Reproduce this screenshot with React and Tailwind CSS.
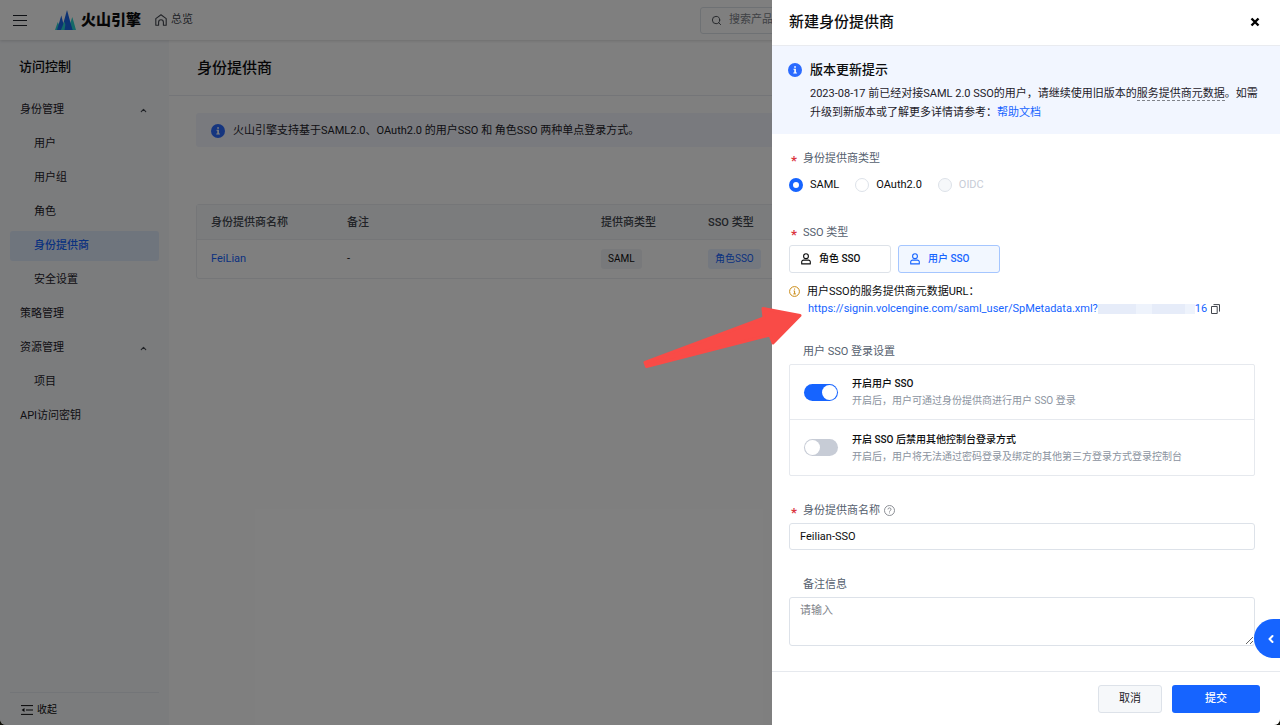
import { useState } from 'react'
import clsx from 'clsx'
import { ChevronUp, ChevronLeft, Search } from 'lucide-react'

const MENU = [
  { label: '身份管理', group: true },
  { label: '用户', child: true },
  { label: '用户组', child: true },
  { label: '角色', child: true },
  { label: '身份提供商', child: true, active: true },
  { label: '安全设置', child: true },
  { label: '策略管理' },
  { label: '资源管理', group: true },
  { label: '项目', child: true },
  { label: 'API访问密钥' },
]

function Logo() {
  return (
    <svg width="21" height="20" viewBox="0 0 21 20" aria-hidden="true">
      <path d="M2.800 12 0 20h6z" fill="#2ad3d0" />
      <path d="M17.300 7 21 20h-8z" fill="#2ad3d0" />
      <path d="M6.300 5.500 2 20h8z" fill="#1a66e8" />
      <path d="M12 0 6.500 20h11z" fill="#1a66e8" />
      <path d="M9.300 11.500 6 20h7z" fill="#2ad3d0" />
      <path d="M12 6 9.500 20h8z" fill="#1a66e8" />
    </svg>
  )
}

function HomeIcon() {
  return (
    <svg width="12" height="12" viewBox="0 0 12 12" fill="none" stroke="currentColor" strokeWidth="1.1" strokeLinejoin="round" aria-hidden="true">
      <path d="M.8 4.600 6 .8l5.200 3.800v6.600H8.400V8.200a2.400 2.400 0 0 0-4.800 0v3H.8z" />
    </svg>
  )
}

function InfoIcon() {
  return (
    <svg className="shrink-0" width="14" height="14" viewBox="0 0 14 14" aria-hidden="true">
      <circle cx="7" cy="7" r="7" fill="#2b6bff" />
      <path d="M6.200 3.200h1.700v1.500H6.200zM5.500 5.700h2.400v3.700h1v1.100H5.300V9.400h1V6.800h-.8z" fill="#fff" />
    </svg>
  )
}

function WarnIcon() {
  return (
    <svg className="shrink-0" width="11" height="11" viewBox="0 0 11 11" fill="none" stroke="#c98a14" aria-hidden="true">
      <circle cx="5.500" cy="5.500" r="4.900" />
      <path d="M5.600 2.500v1.200M4.600 4.900h1v2.900M4.300 7.900h2.600" />
    </svg>
  )
}

function UserIcon() {
  return (
    <svg width="10" height="12" viewBox="0 0 10 12" fill="none" stroke="currentColor" strokeWidth="1.1" strokeLinejoin="round" aria-hidden="true">
      <circle cx="5" cy="3.200" r="2.400" />
      <path d="M.7 10.900V9a1.900 1.900 0 0 1 1.900-1.900h4.800A1.900 1.900 0 0 1 9.300 9v1.900z" />
    </svg>
  )
}

function CopyIcon() {
  return (
    <svg width="9" height="10" viewBox="0 0 9 10" fill="none" stroke="#42464e" aria-hidden="true">
      <path d="M.5 2.500h5.700v7H.5z" />
      <path d="M2.500.6h6v7" />
    </svg>
  )
}

function HelpIcon() {
  return (
    <svg width="11" height="11" viewBox="0 0 11 11" fill="none" stroke="#80838a" strokeWidth=".9" aria-hidden="true">
      <circle cx="5.500" cy="5.500" r="5" />
      <path d="M4 4.400a1.500 1.500 0 1 1 2.200 1.300c-.5.300-.7.500-.7 1M5.500 7.500v.9" />
    </svg>
  )
}

function CollapseIcon() {
  return (
    <svg width="12" height="10" viewBox="0 0 12 10" fill="none" stroke="currentColor" aria-hidden="true">
      <path d="M0 .6h12M5 5h7M0 9.400h12" />
      <path d="M3.500 3v4L.6 5z" fill="currentColor" stroke="none" />
    </svg>
  )
}

function Arrow() {
  return (
    <svg className="pointer-events-none absolute top-[304px] -left-[130px]" width="164" height="68" viewBox="0 0 164 68" aria-hidden="true">
      <path
        d="M3 58.500 122 14 121 4.500 158 11.500 131 39 128 31 4.500 62.500z"
        fill="#f94b47" stroke="#f94b47" strokeWidth="3" strokeLinejoin="round"
      />
    </svg>
  )
}

function Topbar() {
  return (
    <header className="relative z-10 flex h-10 shrink-0 items-center justify-between bg-white pl-[13px] shadow-[0_1px_3px_rgba(0,0,0,0.14)]">
      <div className="flex items-center">
        <button aria-label="菜单" className="flex w-[14px] flex-col gap-1">
          <span className="h-px bg-[#1d2129]" />
          <span className="h-px bg-[#1d2129]" />
          <span className="h-px bg-[#1d2129]" />
        </button>
        <a href="#" className="ml-7 flex items-center gap-[5px] text-[15px] leading-5 font-black">
          <Logo />火山引擎
        </a>
        <a href="#" className="ml-[14px] flex items-center gap-1 text-[#42464e]">
          <HomeIcon />总览
        </a>
      </div>
      <div className="w-[580px]">
        <label className="flex h-[27px] w-[240px] items-center gap-[7px] rounded-[3px] border border-[#dde2e9] px-[10px]">
          <Search size={11} className="shrink-0 text-[#42464e]" />
          <input type="search" aria-label="搜索" placeholder="搜索产品、文档" className="w-full bg-transparent outline-none placeholder:text-[#80838a]" />
        </label>
      </div>
    </header>
  )
}

function Sidebar() {
  return (
    <aside className="flex w-[169px] shrink-0 flex-col bg-[#f6f8fb] px-[10px]">
      <h2 className="pt-[17px] pl-[9px] text-[13px] leading-5 font-medium">访问控制</h2>
      <nav className="mt-[18px] flex flex-col gap-1">
        {MENU.map((item) => (
          <a
            key={item.label}
            href="#"
            className={clsx(
              'flex h-[30px] items-center justify-between rounded-[3px] pr-[11px]',
              item.child ? 'pl-6' : 'pl-[10px]',
              item.active ? 'bg-[#dfeafb] font-medium text-[#1664ff]' : 'text-[#1d2129]'
            )}
          >
            {item.label}
            {item.group && <ChevronUp size={9} strokeWidth={3} className="text-[#42464e]" />}
          </a>
        ))}
      </nav>
      <button className="mt-auto flex h-[33px] items-center gap-1 border-t border-[#e6eaf0] pt-[2px] pl-[11px] text-[10px]">
        <CollapseIcon />收起
      </button>
    </aside>
  )
}

function Providers() {
  return (
    <main className="min-w-0 flex-1 overflow-hidden bg-white">
      <div className="flex h-14 items-center border-b border-[#e9ebf0] px-7">
        <h1 className="text-[15px] leading-6 font-medium">身份提供商</h1>
      </div>
      <div className="px-[27px] pt-[17px]">
        <div className="flex h-[34px] items-center gap-2 rounded-[3px] bg-[#f2f5fc] px-[15px] pt-px text-[#1d2129]">
          <InfoIcon />
          火山引擎支持基于SAML2.0、OAuth2.0 的用户SSO 和 角色SSO 两种单点登录方式。
        </div>
        <table className="mt-[57px] w-full table-fixed border-separate border-spacing-0 rounded-[3px] border border-[#eaedf1] text-left">
          <thead>
            <tr className="h-[35px] bg-[#f6f8fa] text-[#42464e]">
              <th className="w-[137px] border-b border-[#eaedf1] pt-[2px] pl-[14px] font-medium">身份提供商名称</th>
              <th className="w-[254px] border-b border-[#eaedf1] pt-[2px] pl-[13px] font-medium">备注</th>
              <th className="w-[107px] border-b border-[#eaedf1] pt-[2px] pl-[13px] font-medium">提供商类型</th>
              <th className="border-b border-[#eaedf1] pt-[2px] pl-[13px] font-medium">SSO 类型</th>
            </tr>
          </thead>
          <tbody>
            <tr className="h-[38px]">
              <td className="pl-[14px]"><a href="#" className="text-[#1664ff]">FeiLian</a></td>
              <td className="pl-[13px]">-</td>
              <td className="pl-[13px]"><span className="inline-block rounded-[3px] bg-[#f1f3f6] px-[7px] text-[10px] leading-5">SAML</span></td>
              <td className="pl-[13px]"><span className="inline-block rounded-[3px] bg-[#e8f1ff] px-[7px] text-[10px] leading-5 text-[#1664ff]">角色SSO</span></td>
            </tr>
          </tbody>
        </table>
      </div>
    </main>
  )
}

function FieldLabel({ required, htmlFor, children }) {
  return (
    <label htmlFor={htmlFor} className="mb-[3px] flex h-5 items-center pt-px pl-[2px] text-[#55606e]">
      <span className="w-3 pt-1 text-[13px] leading-3 font-bold text-[#db373f]">{required && '*'}</span>
      {children}
    </label>
  )
}

function Radio({ label, ...props }) {
  return (
    <label className="flex items-center gap-[7px] has-disabled:text-[#c7ccd6]">
      <input
        type="radio"
        name="provider-type"
        className="size-[14px] appearance-none rounded-full border border-[#dde2e9] bg-white checked:border-[4px] checked:border-[#1664ff] disabled:bg-[#f6f8fa]"
        {...props}
      />
      {label}
    </label>
  )
}

function ToggleRow({ title, desc, ...props }) {
  return (
    <label className="flex h-[55px] items-center gap-[14px] px-[14px] text-[10px]">
      <input
        type="checkbox"
        role="switch"
        className="h-[17px] w-[34px] shrink-0 appearance-none rounded-full bg-[#c7ccd6] p-px before:block before:size-[15px] before:rounded-full before:bg-white checked:bg-[#1664ff] checked:before:ml-[17px]"
        {...props}
      />
      <span className="leading-[17px]">
        <span className="block font-medium">{title}</span>
        <span className="block text-[#8b93a0]">{desc}</span>
      </span>
    </label>
  )
}

function SsoButton({ active, children, onClick }) {
  return (
    <button
      aria-pressed={active}
      onClick={onClick}
      className={clsx(
        'flex h-7 w-[102px] items-center gap-2 rounded-[3px] border pl-[11px] text-[10px] font-medium',
        active ? 'border-[#a5c6ff] bg-[#f2f7ff] text-[#1664ff]' : 'border-[#dde2e9] bg-white'
      )}
    >
      <UserIcon />{children}
    </button>
  )
}

function Drawer() {
  const [type, setType] = useState('SAML')
  const [sso, setSso] = useState('user')
  const [enabled, setEnabled] = useState(true)
  const [exclusive, setExclusive] = useState(false)
  const [name, setName] = useState('Feilian-SSO')

  return (
    <section role="dialog" aria-label="新建身份提供商" className="absolute inset-y-0 right-0 z-30 flex w-[508px] flex-col bg-white">
      <div className="flex h-[46px] shrink-0 items-center justify-between border-b border-[#e9ebf0] pr-5 pb-[2px] pl-[17px]">
        <h2 className="text-[15px] leading-6 font-medium">新建身份提供商</h2>
        <button aria-label="关闭">
          <svg width="10" height="10" viewBox="0 0 10 10" stroke="#000" strokeWidth="2.400" aria-hidden="true">
            <path d="m1.500 1.500 7 7M8.500 1.500l-7 7" />
          </svg>
        </button>
      </div>

      <div className="flex shrink-0 gap-2 bg-[#f2f6ff] pt-[14px] pr-[18px] pb-3 pl-4">
        <div className="pt-[3px]"><InfoIcon /></div>
        <div className="min-w-0">
          <h3 className="mb-1 text-[13px] leading-5 font-medium">版本更新提示</h3>
          <p className="text-[#1d2129] leading-[19px]">
            2023-08-17 前已经对接SAML 2.0 SSO的用户，请继续使用旧版本的
            <span className="border-b border-dashed border-[#80838a]">服务提供商元数据</span>
            。如需升级到新版本或了解更多详情请参考：
            <a href="#" className="text-[#1664ff]">帮助文档</a>
          </p>
        </div>
      </div>

      <div className="flex min-h-0 flex-1 flex-col gap-6 overflow-hidden pt-[14px] pr-[25px] pl-[17px]">
        <div>
          <FieldLabel required>身份提供商类型</FieldLabel>
          <div className="flex h-[27px] items-center gap-4">
            <Radio label="SAML" checked={type === 'SAML'} onChange={() => setType('SAML')} />
            <Radio label="OAuth2.0" checked={type === 'OAuth2.0'} onChange={() => setType('OAuth2.0')} />
            <Radio label="OIDC" disabled />
          </div>
        </div>

        <div>
          <FieldLabel required>SSO 类型</FieldLabel>
          <div className="flex gap-[7px]">
            <SsoButton active={sso === 'role'} onClick={() => setSso('role')}>角色 SSO</SsoButton>
            <SsoButton active={sso === 'user'} onClick={() => setSso('user')}>用户 SSO</SsoButton>
          </div>
          <div className="mt-[10px] leading-[17px]">
            <div className="flex items-center gap-[7px]">
              <WarnIcon />用户SSO的服务提供商元数据URL：
            </div>
            <div className="flex items-center pl-[19px]">
              <a href="#" className="flex items-center text-[#1664ff]">
                https://signin.volcengine.com/saml_user/SpMetadata.xml?
                <span className="flex h-[10px] w-[97px] bg-[#e6ecf9]">
                  <span className="ml-[38px] w-4 bg-[#eef3fc]" />
                  <span className="ml-auto w-[10px] bg-[#eef3fc]" />
                </span>
                16
              </a>
              <button aria-label="复制" className="ml-1"><CopyIcon /></button>
            </div>
          </div>
        </div>

        <div>
          <FieldLabel>用户 SSO 登录设置</FieldLabel>
          <div className="divide-y divide-[#e6e9ee] rounded-[2px] border border-[#e6e9ee]">
            <ToggleRow
              title="开启用户 SSO"
              desc="开启后，用户可通过身份提供商进行用户 SSO 登录"
              checked={enabled}
              onChange={(e) => setEnabled(e.target.checked)}
            />
            <ToggleRow
              title="开启 SSO 后禁用其他控制台登录方式"
              desc="开启后，用户将无法通过密码登录及绑定的其他第三方登录方式登录控制台"
              checked={exclusive}
              onChange={(e) => setExclusive(e.target.checked)}
            />
          </div>
        </div>

        <div>
          <FieldLabel required htmlFor="provider-name">
            <span className="mr-1">身份提供商名称</span><HelpIcon />
          </FieldLabel>
          <input
            id="provider-name"
            value={name}
            onChange={(e) => setName(e.target.value)}
            className="h-[27px] w-full rounded-[3px] border border-[#dde2e9] px-[10px] outline-none"
          />
        </div>

        <div>
          <FieldLabel htmlFor="provider-note">备注信息</FieldLabel>
          <textarea
            id="provider-note"
            placeholder="请输入"
            className="block h-[49px] w-full rounded-[3px] border border-[#dde2e9] px-[10px] py-1 leading-[18px] outline-none placeholder:text-[#80838a]"
          />
        </div>
      </div>

      <div className="flex h-[54px] shrink-0 items-center justify-end gap-[10px] border-t border-[#e6e9ee] pr-5">
        <button className="h-7 w-16 rounded-[3px] border border-[#dde2e9] bg-[#f6f8fa] text-[#1d2129]">取消</button>
        <button className="h-7 w-[88px] rounded-[3px] bg-[#1664ff] font-medium text-white">提交</button>
      </div>

      <button aria-label="展开" className="absolute right-0 bottom-[67px] flex h-[39px] w-[26px] items-center justify-center rounded-l-full bg-[#1664ff] pl-2 text-white">
        <ChevronLeft size={12} strokeWidth={4} />
      </button>
      <Arrow />
    </section>
  )
}

export default function App() {
  return (
    <div className="bg-[#12120a] font-[Roboto,'Noto_Sans_CJK_SC',sans-serif] text-[11px] leading-[18px] text-[#0c0d0e]">
      <div className="relative flex h-screen flex-col overflow-hidden rounded-b-[6px]">
        <Topbar />
        <div className="flex min-h-0 flex-1">
          <Sidebar />
          <Providers />
        </div>
        <div className="absolute inset-0 z-20 bg-black/50" />
        <Drawer />
      </div>
    </div>
  )
}
